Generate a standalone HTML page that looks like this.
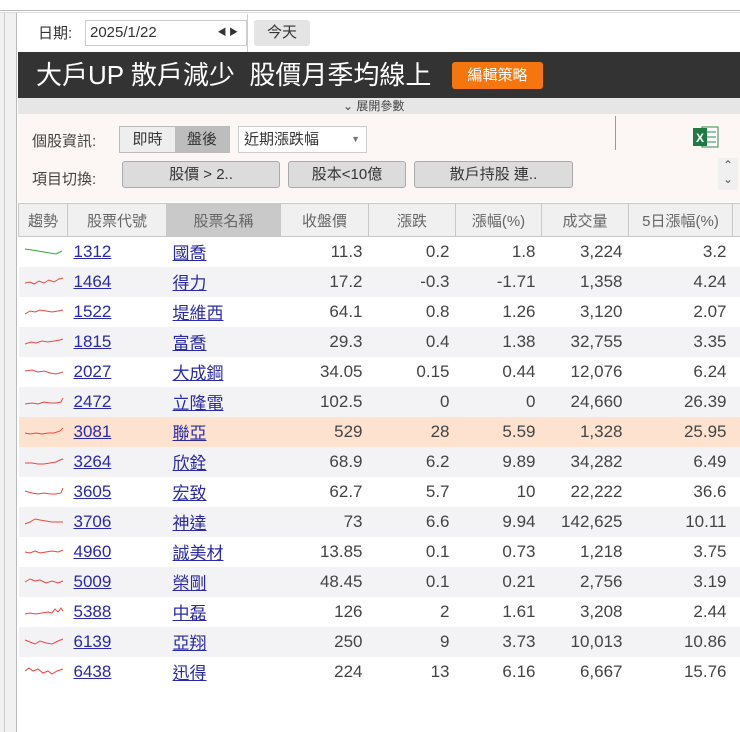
<!DOCTYPE html>
<html><head><meta charset="utf-8"><style>
*{margin:0;padding:0;box-sizing:border-box}
body{width:740px;height:732px;background:#fff;position:relative;overflow:hidden;font-family:"Liberation Sans","Noto Sans CJK TC",sans-serif;color:#444}
.abs{position:absolute}
table{border-collapse:collapse;position:absolute;left:18px;top:203px;width:722px;table-layout:fixed}
td,th{height:30px;font-size:17px;font-weight:normal;white-space:nowrap;overflow:hidden}
th{background:#f0f0f0;border:1px solid #c8c8c8;color:#666;font-size:15px;height:33px}
td{text-align:right;padding-right:6px;color:#444}
tr.g td{background:#f3f3f5}
tr.h td{background:#fde3cf}
td.l{text-align:left;padding-left:6px}
td a{color:#2a2aa8;text-decoration:underline}
td.s{text-align:left;padding-left:5px}
.btn{position:absolute;background:#dcdcdc;border:1px solid #aaa;border-radius:3px;font-size:15px;text-align:center;color:#333}
</style></head><body>
<div class="abs" style="left:0;top:13px;width:17px;height:719px;background:#f1f1f1;border-right:1px solid #bbb"></div>
<div class="abs" style="left:4px;top:13px;width:1px;height:719px;background:#ccc"></div>
<div class="abs" style="left:0;top:10px;width:740px;height:3px;border-top:1px solid #bbb;border-bottom:1px solid #ddd"></div>
<div class="abs" style="left:18px;top:14px;width:230px;height:38px;border-right:1px solid #ccc"></div>
<div class="abs" style="left:38px;top:22px;font-size:15px;color:#333">日期:</div>
<div class="abs" style="left:85px;top:20px;width:162px;height:26px;border:1px solid #ccc;font-size:15px;padding:3px 4px;color:#333">2025/1/22<span style="position:absolute;right:8px;top:4px;font-size:9px">◀ ▶</span></div>
<div class="btn" style="left:254px;top:20px;width:56px;height:26px;border:none;background:#e4e4e4;line-height:26px">今天</div>
<div class="abs" style="left:18px;top:52px;width:722px;height:46px;background:#333"></div>
<div class="abs" style="left:36px;top:58px;font-size:26px;color:#fff;line-height:34px">大戶UP 散戶減少&nbsp; 股價月季均線上</div>
<div class="abs" style="left:452px;top:62px;width:91px;height:27px;background:#f5760f;border-radius:3px;color:#fff;font-size:15px;text-align:center;line-height:27px">編輯策略</div>
<div class="abs" style="left:18px;top:98px;width:722px;height:16px;background:#e6e6e6;font-size:12px;color:#444;line-height:16px"><span style="position:absolute;left:325px">⌄ 展開參數</span></div>
<div class="abs" style="left:18px;top:114px;width:722px;height:88px;background:#fcf7f4"></div>
<div class="abs" style="left:615px;top:116px;width:1px;height:34px;background:#999"></div>
<div class="abs" style="left:32px;top:130px;font-size:15px;color:#444">個股資訊:</div>
<div class="abs" style="left:119px;top:126px;width:111px;height:27px;border:1px solid #bbb;font-size:15px;line-height:25px;color:#333"><span style="display:inline-block;width:55px;text-align:center;background:#eee">即時</span><span style="display:inline-block;width:54px;text-align:center;background:#bdbdbd">盤後</span></div>
<div class="abs" style="left:238px;top:126px;width:129px;height:27px;border:1px solid #ccc;background:#fff;font-size:15px;line-height:25px;padding-left:5px;color:#333">近期漲跌幅<span style="position:absolute;right:6px;font-size:9px;color:#777">▼</span></div>
<div class="abs" style="left:692px;top:124px;width:28px;height:26px"><svg width="28" height="26"><rect x="10" y="3" width="16" height="20" fill="#fff" stroke="#2e8b4e"/><line x1="13" y1="8" x2="24" y2="8" stroke="#2e8b4e"/><line x1="13" y1="13" x2="24" y2="13" stroke="#2e8b4e"/><line x1="13" y1="18" x2="24" y2="18" stroke="#2e8b4e"/><rect x="1" y="4" width="14" height="18" fill="#1f7a43"/><text x="8" y="18" font-size="12" font-weight="bold" fill="#fff" text-anchor="middle" font-family="Liberation Sans">X</text></svg></div>
<div class="abs" style="left:32px;top:168px;font-size:15px;color:#444">項目切換:</div>
<div class="btn" style="left:122px;top:161px;width:158px;height:27px;line-height:25px">股價 &gt; 2..</div>
<div class="btn" style="left:288px;top:161px;width:118px;height:27px;line-height:25px">股本&lt;10億</div>
<div class="btn" style="left:414px;top:161px;width:159px;height:27px;line-height:25px">散戶持股 連..</div>
<div class="abs" style="left:718px;top:158px;width:20px;height:32px;background:#f0f0f0;font-size:12px;text-align:center;line-height:14px;color:#555">⌃<br>⌄</div>
<table>
<colgroup><col style="width:49px"><col style="width:99px"><col style="width:114px"><col style="width:88px"><col style="width:87px"><col style="width:86px"><col style="width:87px"><col style="width:104px"><col style="width:8px"></colgroup>
<tr><th>趨勢</th><th>股票代號</th><th style="background:#c9c9c9">股票名稱</th><th>收盤價</th><th>漲跌</th><th>漲幅(%)</th><th>成交量</th><th>5日漲幅(%)</th><th></th></tr>
<tr><td class="s"><svg width="40" height="12"><polyline points="1,4 8,5 14,6 20,7 26,8 32,9 38,6" fill="none" stroke="#3a3" stroke-width="1"/></svg></td><td class="l"><a>1312</a></td><td class="l"><a>國喬</a></td><td>11.3</td><td>0.2</td><td>1.8</td><td>3,224</td><td>3.2</td><td></td></tr>
<tr class="g"><td class="s"><svg width="40" height="12"><polyline points="1,8 6,7 10,9 15,6 20,8 25,5 30,7 35,4 39,3" fill="none" stroke="#e44" stroke-width="1"/></svg></td><td class="l"><a>1464</a></td><td class="l"><a>得力</a></td><td>17.2</td><td>-0.3</td><td>-1.71</td><td>1,358</td><td>4.24</td><td></td></tr>
<tr><td class="s"><svg width="40" height="12"><polyline points="1,9 6,6 11,7 16,5 22,6 28,7 34,6 39,5" fill="none" stroke="#e44" stroke-width="1"/></svg></td><td class="l"><a>1522</a></td><td class="l"><a>堤維西</a></td><td>64.1</td><td>0.8</td><td>1.26</td><td>3,120</td><td>2.07</td><td></td></tr>
<tr class="g"><td class="s"><svg width="40" height="12"><polyline points="1,9 7,7 12,8 18,6 24,7 30,6 36,5 39,4" fill="none" stroke="#e44" stroke-width="1"/></svg></td><td class="l"><a>1815</a></td><td class="l"><a>富喬</a></td><td>29.3</td><td>0.4</td><td>1.38</td><td>32,755</td><td>3.35</td><td></td></tr>
<tr><td class="s"><svg width="40" height="12"><polyline points="1,6 8,5 14,7 20,6 26,8 32,9 39,7" fill="none" stroke="#e44" stroke-width="1"/></svg></td><td class="l"><a>2027</a></td><td class="l"><a>大成鋼</a></td><td>34.05</td><td>0.15</td><td>0.44</td><td>12,076</td><td>6.24</td><td></td></tr>
<tr class="g"><td class="s"><svg width="40" height="12"><polyline points="1,9 8,8 14,9 20,7 26,8 32,8 37,7 39,3" fill="none" stroke="#e44" stroke-width="1"/></svg></td><td class="l"><a>2472</a></td><td class="l"><a>立隆電</a></td><td>102.5</td><td>0</td><td>0</td><td>24,660</td><td>26.39</td><td></td></tr>
<tr class="h"><td class="s"><svg width="40" height="12"><polyline points="1,8 6,9 12,8 18,9 24,8 30,8 36,6 39,3" fill="none" stroke="#e44" stroke-width="1"/></svg></td><td class="l"><a>3081</a></td><td class="l"><a>聯亞</a></td><td>529</td><td>28</td><td>5.59</td><td>1,328</td><td>25.95</td><td></td></tr>
<tr class="g"><td class="s"><svg width="40" height="12"><polyline points="1,8 8,8 14,9 20,9 26,8 32,7 36,5 39,4" fill="none" stroke="#e44" stroke-width="1"/></svg></td><td class="l"><a>3264</a></td><td class="l"><a>欣銓</a></td><td>68.9</td><td>6.2</td><td>9.89</td><td>34,282</td><td>6.49</td><td></td></tr>
<tr><td class="s"><svg width="40" height="12"><polyline points="1,6 8,8 14,9 20,8 26,9 32,9 37,8 39,3" fill="none" stroke="#e44" stroke-width="1"/></svg></td><td class="l"><a>3605</a></td><td class="l"><a>宏致</a></td><td>62.7</td><td>5.7</td><td>10</td><td>22,222</td><td>36.6</td><td></td></tr>
<tr class="g"><td class="s"><svg width="40" height="12"><polyline points="1,9 6,7 11,4 16,5 22,6 28,7 34,7 39,7" fill="none" stroke="#e44" stroke-width="1"/></svg></td><td class="l"><a>3706</a></td><td class="l"><a>神達</a></td><td>73</td><td>6.6</td><td>9.94</td><td>142,625</td><td>10.11</td><td></td></tr>
<tr><td class="s"><svg width="40" height="12"><polyline points="1,7 6,8 11,6 16,8 22,7 28,6 34,7 39,5" fill="none" stroke="#e44" stroke-width="1"/></svg></td><td class="l"><a>4960</a></td><td class="l"><a>誠美材</a></td><td>13.85</td><td>0.1</td><td>0.73</td><td>1,218</td><td>3.75</td><td></td></tr>
<tr class="g"><td class="s"><svg width="40" height="12"><polyline points="1,7 6,4 11,6 16,5 22,8 28,6 34,8 39,6" fill="none" stroke="#e44" stroke-width="1"/></svg></td><td class="l"><a>5009</a></td><td class="l"><a>榮剛</a></td><td>48.45</td><td>0.1</td><td>0.21</td><td>2,756</td><td>3.19</td><td></td></tr>
<tr><td class="s"><svg width="40" height="12"><polyline points="1,9 6,8 12,9 18,8 24,7 28,8 31,4 34,7 37,3 39,6" fill="none" stroke="#e44" stroke-width="1"/></svg></td><td class="l"><a>5388</a></td><td class="l"><a>中磊</a></td><td>126</td><td>2</td><td>1.61</td><td>3,208</td><td>2.44</td><td></td></tr>
<tr class="g"><td class="s"><svg width="40" height="12"><polyline points="1,5 6,7 11,9 16,6 22,8 28,9 34,6 39,4" fill="none" stroke="#e44" stroke-width="1"/></svg></td><td class="l"><a>6139</a></td><td class="l"><a>亞翔</a></td><td>250</td><td>9</td><td>3.73</td><td>10,013</td><td>10.86</td><td></td></tr>
<tr><td class="s"><svg width="40" height="12"><polyline points="1,6 5,3 9,6 14,4 19,8 24,6 28,9 33,6 39,4" fill="none" stroke="#e44" stroke-width="1"/></svg></td><td class="l"><a>6438</a></td><td class="l"><a>迅得</a></td><td>224</td><td>13</td><td>6.16</td><td>6,667</td><td>15.76</td><td></td></tr>
</table>
</body></html>
